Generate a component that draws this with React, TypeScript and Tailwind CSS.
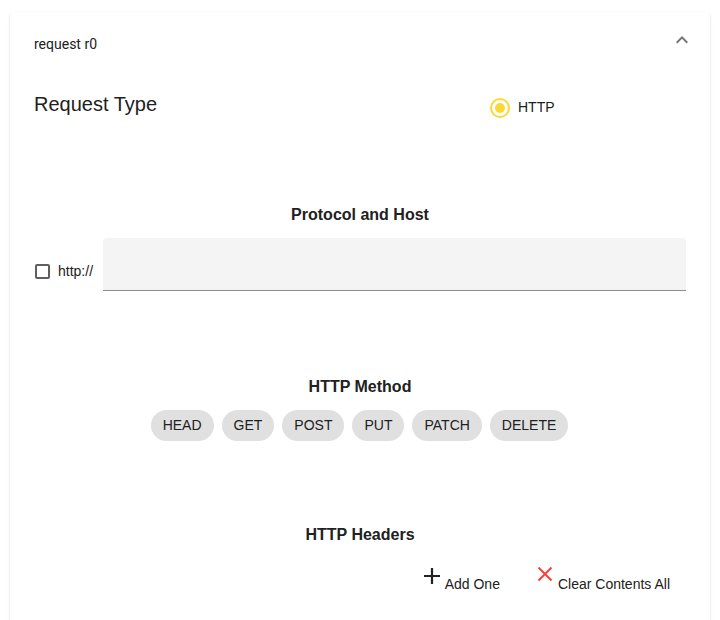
import React from "react";

const methods = ["HEAD", "GET", "POST", "PUT", "PATCH", "DELETE"];

export default function App() {
  return (
    <div className="w-[720px] h-[620px] overflow-hidden bg-white pt-3 px-[10px] font-['Liberation_Sans',Arial,sans-serif] text-[#212121]">
      <div className="rounded bg-white shadow-[0_2px_1px_-1px_rgba(0,0,0,0.2),0_1px_1px_0_rgba(0,0,0,0.14),0_1px_3px_0_rgba(0,0,0,0.12)] h-[640px]">
        {/* accordion header */}
        <div className="flex items-center justify-between pl-6 pr-[16px] h-16">
          <span className="text-[14px] font-['Roboto',sans-serif]">request r0</span>
          <svg width="24" height="24" viewBox="0 0 24 24" className="fill-[#757575] -mt-2">
            <path d="M7.41 15.41 12 10.83l4.59 4.58L18 14l-6-6-6 6z" />
          </svg>
        </div>

        <div className="px-6">
          {/* request type */}
          <div className="flex items-start pt-[13px] h-[129px]">
            <h2 className="text-[20px] w-[456px]">Request Type</h2>
            <label className="flex items-center gap-2 pt-[8px]">
              <span className="w-5 h-5 rounded-full border-2 border-[#fdd835] flex items-center justify-center">
                <span className="w-[10px] h-[10px] rounded-full bg-[#fdd835]" />
              </span>
              <span className="text-[14px]">HTTP</span>
            </label>
          </div>

          {/* protocol and host */}
          <h3 className="text-center font-bold text-[16px] leading-5">Protocol and Host</h3>
          <div className="flex items-end gap-[10px] mt-[13px]">
            <div className="flex items-center gap-2 pb-[9px]">
              <span className="w-[15px] h-[15px] rounded-[2px] border-2 border-[#5f5f5f] ml-[1px]" />
              <span className="text-[14px]">http://</span>
            </div>
            <div className="flex-1 h-[53px] bg-[#f4f4f4] rounded-t border-b border-[#8c8c8c]" />
          </div>

          {/* http method */}
          <h3 className="text-center font-bold text-[16px] leading-5 mt-[86px]">HTTP Method</h3>
          <div className="flex justify-center gap-2 mt-[13px] pr-[1px]">
            {methods.map((m) => (
              <button
                key={m}
                className="h-[31px] px-3 rounded-full bg-[#e0e0e0] text-[14px] text-[#212121]"
              >
                {m}
              </button>
            ))}
          </div>

          {/* http headers */}
          <h3 className="text-center font-bold text-[16px] leading-5 mt-[84px]">HTTP Headers</h3>
          <div className="flex justify-end items-end gap-[37px] mt-[22px] pr-[16px]">
            <button className="flex items-end gap-[5px]">
              <svg width="16" height="16" viewBox="0 0 16 16" className="mb-[10px]">
                <path d="M8 0v16M0 8h16" stroke="#212121" strokeWidth="2.2" />
              </svg>
              <span className="text-[14px] leading-5">Add One</span>
            </button>
            <button className="flex items-end gap-[5px]">
              <svg width="16" height="15" viewBox="0 0 16 15" className="mb-[12px]">
                <path d="M1.5 0.5l13 13M14.5 0.5l-13 13" stroke="#f44336" strokeWidth="2" />
              </svg>
              <span className="text-[14px] leading-5">Clear Contents All</span>
            </button>
          </div>
        </div>
      </div>
    </div>
  );
}
